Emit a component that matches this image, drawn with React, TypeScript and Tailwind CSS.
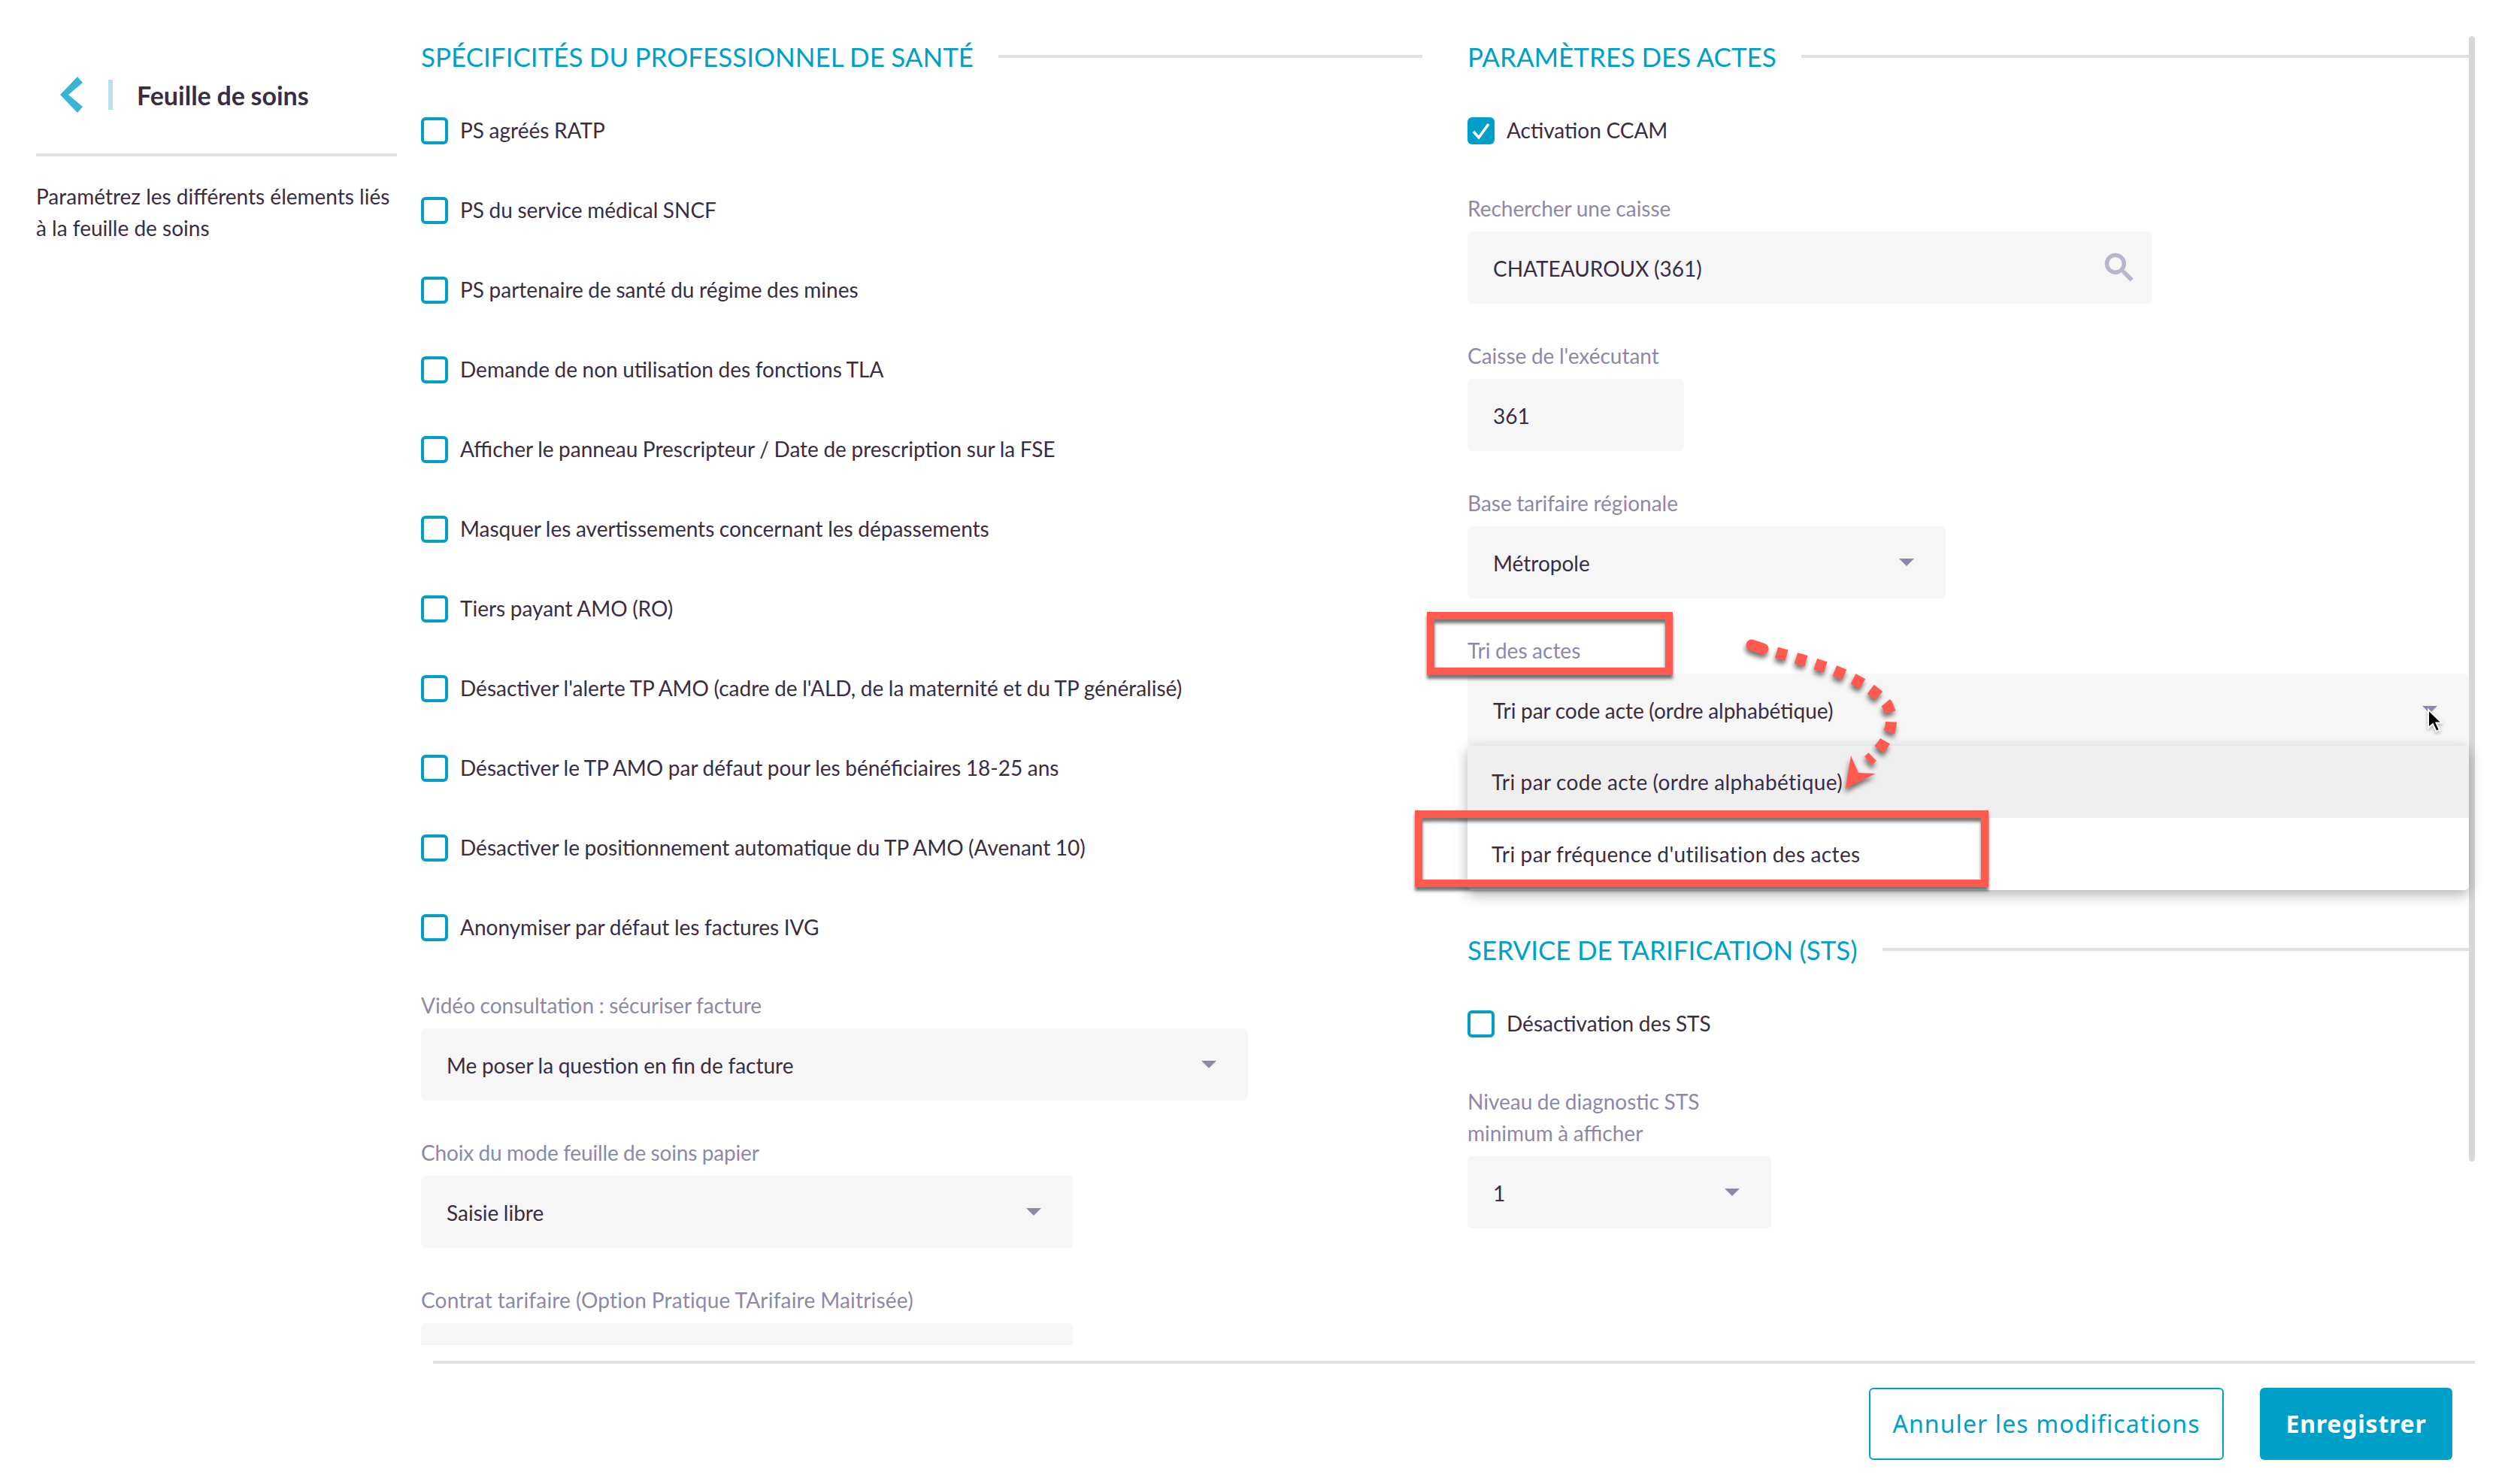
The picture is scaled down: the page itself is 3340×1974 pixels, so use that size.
const checks = [
  'PS agréés RATP',
  'PS du service médical SNCF',
  'PS partenaire de santé du régime des mines',
  'Demande de non utilisation des fonctions TLA',
  'Afficher le panneau Prescripteur / Date de prescription sur la FSE',
  'Masquer les avertissements concernant les dépassements',
  'Tiers payant AMO (RO)',
  "Désactiver l'alerte TP AMO (cadre de l'ALD, de la maternité et du TP généralisé)",
  'Désactiver le TP AMO par défaut pour les bénéficiaires 18-25 ans',
  'Désactiver le positionnement automatique du TP AMO (Avenant 10)',
  'Anonymiser par défaut les factures IVG',
]

function Heading({ title }: { title: string }) {
  return (
    <div className="flex h-[48px] items-center gap-[33px]">
      <h2 className="text-[35px] font-normal whitespace-nowrap text-[#009fc7]">
        {title}
      </h2>
      <div className="h-[4px] flex-1 bg-[#e0e0e0]" />
    </div>
  )
}

function CheckRow({ label, checked }: { label: string; checked?: boolean }) {
  return (
    <div className="flex h-[106px] items-center gap-[16px]">
      {checked ? (
        <div className="flex h-[36px] w-[36px] items-center justify-center rounded-md bg-[#009fc7]">
          <svg width="26" height="24" viewBox="0 0 26 24" fill="none">
            <path d="M3 13 L10 21 L23 3" stroke="white" strokeWidth="3.5" />
          </svg>
        </div>
      ) : (
        <div className="h-[36px] w-[36px] rounded-md border-[4px] border-[#009fc7]" />
      )}
      <span className="-mt-[2px] text-[28px] text-[#3a2d41]">{label}</span>
    </div>
  )
}

function Label({ children }: { children: React.ReactNode }) {
  return (
    <div className="-mt-[2px] mb-[10px] text-[28px] leading-[42px] text-[#8e88a8]">
      {children}
    </div>
  )
}

function Arrow() {
  return (
    <svg
      width="20"
      height="10"
      viewBox="0 0 20 10"
      className="shrink-0"
      fill="#8e88a8"
    >
      <path d="M0 0 H20 L10 10 Z" />
    </svg>
  )
}

function SearchIcon() {
  return (
    <svg
      width="50"
      height="50"
      viewBox="0 0 24 24"
      fill="#b9b5cf"
      stroke="#b9b5cf"
      strokeWidth="0.6"
    >
      <path d="M15.5 14h-.79l-.28-.27A6.471 6.471 0 0 0 16 9.5 6.5 6.5 0 1 0 9.5 16c1.61 0 3.09-.59 4.23-1.57l.27.28v.79l5 4.99L20.49 19l-4.99-5zm-6 0C7.01 14 5 11.99 5 9.5S7.01 5 9.5 5 14 7.01 14 9.5 11.99 14 9.5 14z" />
    </svg>
  )
}

function Select({ value, width }: { value: string; width: string }) {
  return (
    <div
      className={`flex h-[96px] items-center justify-between rounded-md bg-[#f6f6f6] pr-[42px] pl-[34px] text-[28px] text-[#3a2d41] ${width}`}
    >
      <span className="pt-[2px]">{value}</span>
      <Arrow />
    </div>
  )
}

function Sidebar() {
  return (
    <aside className="w-[560px] shrink-0 pt-[72px] pl-[48px]">
      <div className="w-[480px]">
        <div className="mb-[24px] flex h-[108px] items-center pl-[32px]">
          <svg width="30" height="48" viewBox="0 0 30 48" fill="#39b4d6">
            <path d="M23 0 L30 8 L11 24 L30 40 L23 48 L0 24 Z" />
          </svg>
          <div className="mr-[32px] ml-[34px] h-[40px] w-[6px] bg-[#b5e0ec]" />
          <span className="text-[34px] font-bold text-[#3a2d41]">
            Feuille de soins
          </span>
        </div>
        <div className="h-[4px] bg-[#e0e0e0]" />
        <p className="mt-[32px] text-[28px] leading-[42px] text-[#3a2d41] [word-spacing:0]">
          Paramétrez les différents élements liés à la feuille de soins
        </p>
      </div>
    </aside>
  )
}

function LeftColumn() {
  return (
    <section className="w-[1392px] shrink-0 pt-[51px] pr-[60px]">
      <Heading title="SPÉCIFICITÉS DU PROFESSIONNEL DE SANTÉ" />
      <div className="mt-[22px]">
        {checks.map((label) => (
          <CheckRow key={label} label={label} />
        ))}
      </div>
      <div className="mt-[31px]">
        <Label>Vidéo consultation : sécuriser facture</Label>
        <Select value="Me poser la question en fin de facture" width="w-[1100px]" />
      </div>
      <div className="mt-[50px]">
        <Label>
          <span className="tracking-[-0.15px]">
            Choix du mode feuille de soins papier
          </span>
        </Label>
        <Select value="Saisie libre" width="w-[867px]" />
      </div>
      <div className="mt-[50px]">
        <Label>
          <span className="tracking-[0.2px]">
            Contrat tarifaire (Option Pratique TArifaire Maitrisée)
          </span>
        </Label>
        <div className="h-[96px] w-[867px] rounded-md bg-[#f6f6f6]" />
      </div>
    </section>
  )
}

function RightColumn() {
  return (
    <section className="w-[1332px] shrink-0 pt-[51px]">
      <Heading title="PARAMÈTRES DES ACTES" />
      <div className="mt-[22px]">
        <CheckRow label="Activation CCAM" checked />
      </div>
      <div className="mt-[31px]">
        <Label>Rechercher une caisse</Label>
        <div className="flex h-[96px] w-[910px] items-center justify-between rounded-md bg-[#f6f6f6] pr-[18px] pl-[34px] text-[28px] text-[#3a2d41]">
          <span className="pt-[2px]">CHATEAUROUX (361)</span>
          <SearchIcon />
        </div>
      </div>
      <div className="mt-[50px]">
        <Label>Caisse de l'exécutant</Label>
        <div className="flex h-[96px] w-[288px] items-center rounded-md bg-[#f6f6f6] pl-[34px] text-[28px] text-[#3a2d41]">
          <span className="pt-[2px]">361</span>
        </div>
      </div>
      <div className="mt-[50px]">
        <Label>Base tarifaire régionale</Label>
        <Select value="Métropole" width="w-[636px]" />
      </div>
      <div className="mt-[50px]">
        <Label>Tri des actes</Label>
        <div className="relative">
          <Select value="Tri par code acte (ordre alphabétique)" width="w-full" />
          <div className="absolute top-full right-0 left-0 z-10 overflow-hidden rounded-b-md bg-white text-[28px] tracking-[0.4px] text-[#3a2d41] shadow-[0_6px_18px_rgba(0,0,0,0.3)]">
            <div className="flex h-[96px] items-center bg-[#efefef] pl-[32px]">
              Tri par code acte (ordre alphabétique)
            </div>
            <div className="flex h-[96px] items-center pl-[32px]">
              Tri par fréquence d'utilisation des actes
            </div>
          </div>
        </div>
      </div>
      <div className="mt-[247px]">
        <Heading title="SERVICE DE TARIFICATION (STS)" />
      </div>
      <div className="mt-[22px]">
        <CheckRow label="Désactivation des STS" />
      </div>
      <div className="mt-[31px]">
        <Label>
          Niveau de diagnostic STS
          <br />
          minimum à afficher
        </Label>
        <Select value="1" width="w-[404px]" />
      </div>
    </section>
  )
}

function Annotations() {
  return (
    <>
      <div className="absolute top-[814px] left-[1898px] z-20 h-[84px] w-[327px] border-[10px] border-[#ff5a4d] shadow-[0_5px_4px_rgba(0,0,0,0.55),inset_0_5px_4px_rgba(0,0,0,0.55)]" />
      <div className="absolute top-[1078px] left-[1882px] z-20 h-[102px] w-[763px] border-[10px] border-[#ff5a4d] shadow-[0_5px_4px_rgba(0,0,0,0.55),inset_0_5px_4px_rgba(0,0,0,0.55)]" />
      <svg
        className="absolute top-[840px] left-[2300px] z-20 drop-shadow-[-1px_5px_3px_rgba(0,0,0,0.55)]"
        width="240"
        height="230"
        viewBox="2300 840 240 230"
        fill="none"
      >
        <path
          d="M2330 858 L2345 863"
          stroke="#ff5a4d"
          strokeWidth="15"
          strokeLinecap="round"
        />
        <path
          d="M2363 868 C2420 884 2480 900 2510 937 C2522 960 2515 985 2485 1012"
          stroke="#ff5a4d"
          strokeWidth="15"
          strokeDasharray="14 13"
        />
        <path
          d="M2462 1005 L2472 1028 L2495 1029 L2455 1049 Z"
          fill="#ff5a4d"
        />
      </svg>
      <svg
        className="absolute top-[942px] left-[3228px] z-30 drop-shadow-[0_2px_2px_rgba(0,0,0,0.3)]"
        width="22"
        height="34"
        viewBox="0 0 22 34"
      >
        <path
          d="M2 2 L2 26 L8 21 L12.5 31 L17 29 L12.5 19.5 L20 19.5 Z"
          fill="black"
          stroke="white"
          strokeWidth="2"
        />
      </svg>
    </>
  )
}

export default function App() {
  return (
    <div className="relative h-[1974px] w-[3340px] overflow-hidden bg-white font-['Lato',sans-serif] [word-spacing:-0.6px]">
      <div className="flex h-[1789px] overflow-hidden">
        <Sidebar />
        <LeftColumn />
        <RightColumn />
        <div className="mt-[48px] h-[1497px] w-[8px] shrink-0 rounded-full bg-[#d8d8d8]" />
      </div>
      <footer className="mt-[21px] ml-[576px] flex w-[2716px] justify-end gap-[48px] border-t-[4px] border-[#e0e0e0] pt-[32px] pr-[30px] font-['Noto_Sans',sans-serif] text-[32px]">
        <button className="h-[96px] w-[472px] rounded-md border-[2px] border-[#009fc7] tracking-[1.1px] text-[#009fc7]">
          Annuler les modifications
        </button>
        <button className="h-[96px] w-[256px] rounded-md bg-[#009fc7] font-bold tracking-[0.8px] text-white">
          Enregistrer
        </button>
      </footer>
      <Annotations />
    </div>
  )
}
